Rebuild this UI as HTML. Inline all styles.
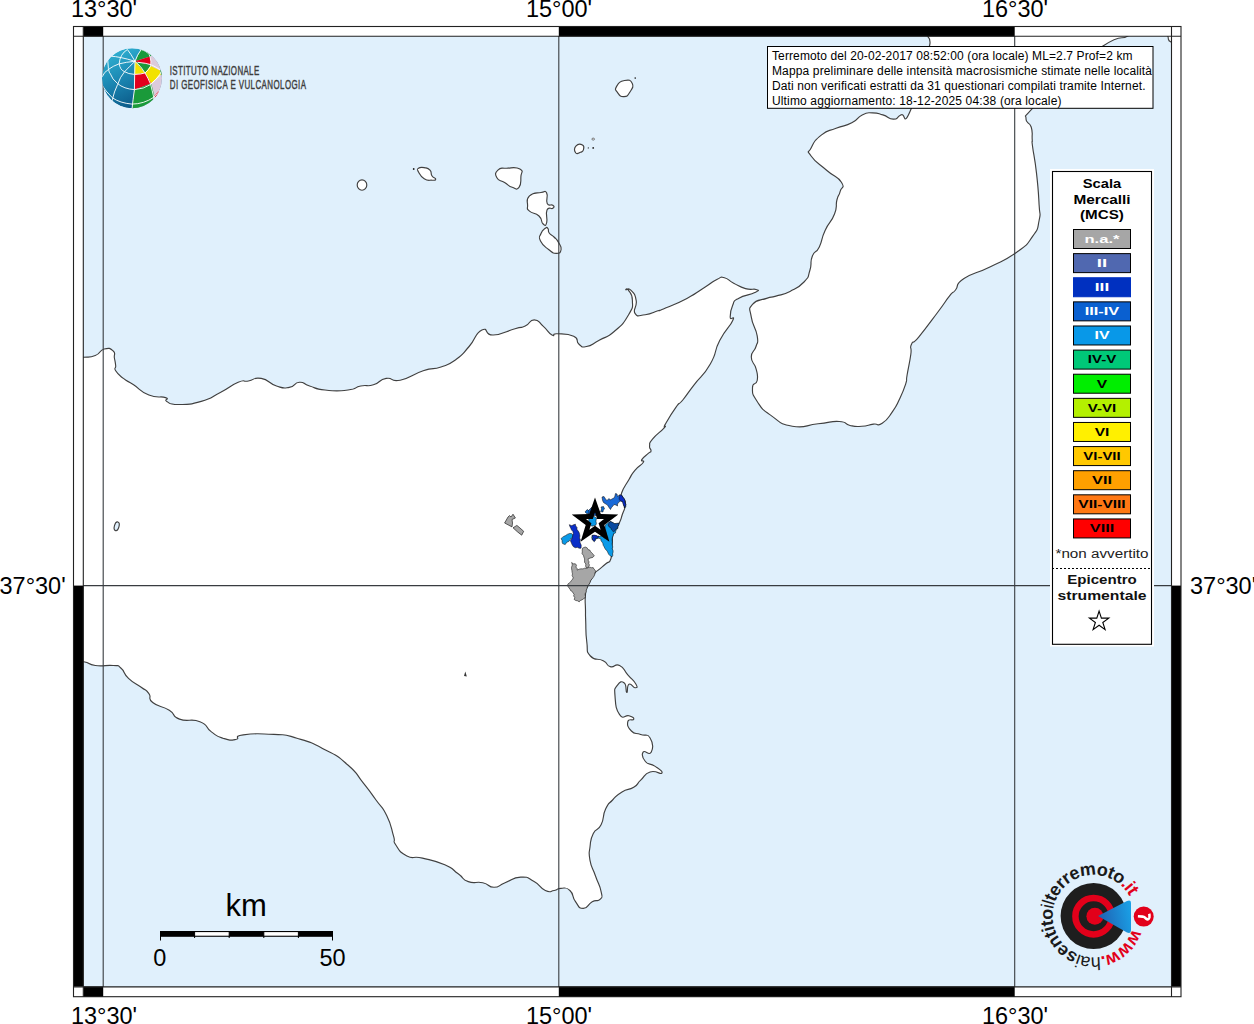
<!DOCTYPE html>
<html><head><meta charset="utf-8">
<style>
html,body{margin:0;padding:0;background:#fff;width:1254px;height:1024px;overflow:hidden;}
svg{display:block;font-family:"Liberation Sans",sans-serif;}
</style></head>
<body>
<svg width="1254" height="1024" viewBox="0 0 1254 1024">
<defs>
<clipPath id="mapclip"><rect x="83" y="36" width="1089" height="951"/></clipPath>
</defs>
<!-- sea -->
<rect x="83" y="36" width="1089" height="951" fill="#e0f0fc"/>
<g clip-path="url(#mapclip)" fill="#fff" stroke="#404040" stroke-width="1.15" stroke-linejoin="round">
<!-- SICILY -->
<path id="sicily" d="M70.0,357.3 C73.9,266.0 75.4,357.8 83.0,357.3 C90.6,356.8 88.9,358.0 95.3,355.5 C101.7,353.0 98.8,350.4 104.2,349.0 C109.6,347.6 110.1,348.3 113.2,351.0 C116.3,353.7 113.7,353.6 114.4,358.0 C115.2,362.4 115.3,361.9 115.7,365.7 C116.1,369.5 113.4,367.0 115.7,370.8 C118.0,374.6 118.0,374.2 123.4,378.4 C128.8,382.6 125.9,379.8 133.6,384.8 C141.2,389.8 139.3,391.2 148.9,395.0 C158.5,398.8 160.1,395.7 165.5,397.6 C170.9,399.5 163.0,399.3 166.8,401.4 C170.6,403.5 167.9,404.5 178.2,404.5 C188.5,404.5 188.6,405.0 201.2,401.4 C213.8,397.8 209.2,398.2 220.3,392.5 C231.4,386.8 229.8,385.8 238.2,382.3 C246.6,378.9 241.5,382.2 248.4,381.0 C255.3,379.8 252.8,376.9 261.2,378.4 C269.6,379.9 268.1,383.3 276.5,386.0 C284.9,388.7 282.3,388.5 289.2,387.4 C296.1,386.3 293.3,382.7 299.4,382.3 C305.5,381.9 301.9,383.7 309.6,386.0 C317.3,388.3 313.5,388.8 325.0,390.0 C336.5,391.2 337.3,391.2 348.0,390.0 C358.7,388.8 353.1,387.6 360.7,386.0 C368.3,384.4 365.8,387.1 373.4,384.8 C381.0,382.5 378.2,379.8 386.2,378.4 C394.2,377.0 389.1,382.5 400.2,380.2 C411.3,377.9 411.0,374.8 423.2,370.8 C435.4,366.8 431.1,370.4 441.0,367.0 C450.9,363.6 447.9,365.4 456.3,359.3 C464.7,353.2 461.4,355.3 469.1,346.5 C476.8,337.7 474.6,333.4 481.9,330.0 C489.2,326.6 483.4,335.4 493.3,335.0 C503.2,334.6 505.4,331.4 515.0,328.7 C524.6,326.0 519.4,328.8 525.2,326.1 C531.0,323.4 528.8,319.8 534.2,319.8 C539.6,319.8 537.8,321.5 543.1,326.1 C548.4,330.7 547.8,332.7 552.0,335.0 C556.2,337.3 550.6,333.4 557.1,333.8 C563.6,334.2 567.2,333.2 573.7,336.3 C580.2,339.4 575.0,340.9 578.8,344.0 C582.6,347.1 580.4,347.6 586.5,346.5 C592.6,345.4 590.8,344.8 599.2,340.2 C607.6,335.6 605.7,338.8 614.5,331.2 C623.3,323.6 623.2,323.9 628.6,314.7 C634.0,305.5 632.4,307.9 632.4,300.6 C632.4,293.3 630.5,293.6 628.6,290.4 C626.7,287.2 625.2,289.9 626.0,289.9 C626.8,289.9 628.0,287.2 631.1,290.4 C634.2,293.6 635.0,293.7 636.2,300.6 C637.4,307.5 632.3,309.2 635.0,313.4 C637.7,317.6 638.3,315.5 645.2,314.7 C652.1,313.9 652.4,312.5 657.9,310.8 C663.4,309.1 654.7,312.7 663.4,309.0 C672.1,305.3 674.2,305.1 686.9,298.4 C699.6,291.7 696.5,292.5 705.6,286.7 C714.7,280.9 711.7,281.9 717.3,279.2 C722.9,276.5 719.5,276.6 724.4,277.8 C729.3,279.0 727.4,280.0 733.7,283.2 C740.0,286.4 738.8,286.7 745.5,288.6 C752.2,290.5 753.2,288.3 756.0,289.5 C758.8,290.7 760.1,289.9 754.8,292.6 C749.5,295.3 745.1,294.5 738.4,298.4 C731.7,302.3 735.1,299.9 732.6,305.5 C730.1,311.1 730.2,312.6 730.2,317.2 C730.2,321.8 735.8,313.7 732.6,320.7 C729.5,327.7 726.4,327.6 719.7,340.6 C713.0,353.6 718.0,350.6 710.3,364.0 C702.6,377.4 702.1,374.3 693.9,385.1 C685.6,395.9 688.2,393.3 682.8,400.0 C677.4,406.7 681.2,400.0 675.9,407.3 C670.6,414.6 668.7,418.2 665.2,424.4 C661.7,430.5 668.0,423.4 664.2,427.8 C660.4,432.2 656.9,433.7 652.5,439.1 C648.1,444.5 650.1,442.4 649.6,445.9 C649.1,449.4 651.3,448.6 651.0,450.8 C650.7,453.0 651.4,450.6 648.6,453.2 C645.8,455.8 643.4,456.8 641.8,459.6 C640.2,462.4 645.3,459.3 643.2,462.5 C641.1,465.7 639.2,465.1 634.9,470.3 C630.5,475.6 632.7,473.3 628.7,480.0 C624.7,486.7 623.4,487.4 621.7,492.7 C620.0,498.0 621.9,494.4 623.0,497.8 C624.1,501.2 625.7,499.2 625.5,504.1 C625.3,509.1 624.3,508.6 622.4,514.3 C620.5,520.0 621.9,517.5 619.2,523.2 C616.5,528.9 615.6,526.8 613.5,533.3 C611.4,539.8 613.0,537.1 612.2,544.7 C611.4,552.3 612.8,553.0 610.9,558.7 C609.0,564.4 609.7,560.4 605.9,563.8 C602.1,567.2 601.7,567.1 598.2,570.1 C594.8,573.1 597.4,569.3 594.4,573.9 C591.4,578.5 590.8,579.3 588.1,585.4 C585.4,591.5 586.3,586.8 585.5,594.2 C584.7,601.6 585.4,602.0 585.5,610.0 C585.6,618.0 585.3,611.3 585.7,620.9 C586.1,630.5 585.4,631.5 586.8,642.0 C588.2,652.5 585.5,650.4 590.4,656.0 C595.3,661.6 597.2,657.5 603.2,660.7 C609.2,663.9 605.4,665.2 610.3,666.6 C615.2,668.0 614.4,662.9 619.6,665.4 C624.9,667.9 622.9,669.2 627.8,674.8 C632.7,680.4 633.9,680.3 636.0,684.2 C638.1,688.1 637.0,687.7 634.9,687.7 C632.8,687.7 631.5,682.8 629.0,684.2 C626.5,685.6 628.1,692.8 626.7,692.4 C625.3,692.0 627.1,685.1 624.3,683.0 C621.5,680.9 620.1,681.4 617.3,685.3 C614.5,689.2 614.3,687.1 615.0,695.9 C615.7,704.7 615.4,708.6 619.6,714.6 C623.8,720.6 624.8,714.4 629.0,715.8 C633.2,717.2 634.1,717.6 633.7,719.3 C633.3,721.0 628.5,718.1 627.8,721.6 C627.1,725.1 627.5,727.1 631.4,731.0 C635.3,734.9 635.1,732.4 640.7,734.5 C646.3,736.6 646.9,732.7 650.1,738.0 C653.3,743.3 653.4,747.9 651.3,752.1 C649.2,756.3 644.9,749.3 643.1,752.1 C641.3,754.9 641.9,757.3 645.4,761.5 C648.9,765.7 649.9,762.6 654.8,766.1 C659.7,769.6 663.2,771.4 661.8,773.2 C660.4,775.0 656.4,769.9 650.1,772.0 C643.8,774.1 645.6,775.6 640.7,780.2 C635.8,784.8 639.3,783.7 633.7,787.2 C628.1,790.7 628.3,788.1 622.0,791.9 C615.7,795.7 617.5,794.9 612.6,800.0 C607.7,805.1 609.1,801.6 605.6,809.0 C602.1,816.4 604.8,817.3 601.1,824.7 C597.4,832.1 596.6,826.9 593.3,833.6 C590.0,840.3 591.0,839.0 590.0,847.0 C589.0,855.0 588.4,851.7 590.0,860.4 C591.6,869.1 592.2,866.6 595.5,876.0 C598.8,885.4 599.8,884.6 601.1,891.6 C602.5,898.6 602.7,896.4 600.0,899.4 C597.3,902.4 597.2,899.0 592.2,901.7 C587.2,904.4 588.3,908.4 583.3,908.4 C578.3,908.4 579.5,907.1 575.5,901.7 C571.5,896.3 574.3,894.5 569.9,890.5 C565.5,886.5 565.6,888.3 560.9,888.3 C556.2,888.3 558.9,889.8 554.2,890.5 C549.5,891.2 551.3,893.2 545.3,890.5 C539.3,887.8 541.5,885.6 534.1,881.6 C526.7,877.6 529.4,876.8 520.7,877.1 C512.0,877.4 513.1,879.7 505.1,882.7 C497.1,885.7 500.7,887.2 494.0,887.2 C487.3,887.2 490.5,884.4 482.8,882.7 C475.1,881.0 475.7,884.3 468.3,881.6 C460.9,878.9 465.2,878.8 458.2,873.8 C451.1,868.8 455.5,869.5 444.8,864.8 C434.1,860.1 433.9,860.8 422.5,858.1 C411.1,855.4 414.9,859.9 406.9,855.9 C398.9,851.9 399.7,850.7 395.7,844.7 C391.7,838.7 396.2,844.5 393.5,835.8 C390.8,827.1 392.1,826.4 386.8,815.7 C381.6,805.0 383.1,809.8 376.0,800.0 C368.9,790.2 371.6,793.4 363.2,782.9 C354.8,772.4 359.4,775.0 347.9,765.0 C336.4,755.0 340.3,757.7 325.0,749.7 C309.7,741.7 312.2,742.8 296.9,738.2 C281.6,733.6 290.0,735.4 273.9,734.4 C257.8,733.4 254.8,733.4 243.3,734.9 C231.8,736.4 241.7,738.5 235.6,739.5 C229.5,740.5 230.2,740.5 222.9,738.2 C215.6,735.9 218.3,736.9 211.4,731.9 C204.5,726.9 209.5,725.5 199.9,721.7 C190.3,717.9 188.7,722.6 179.5,719.1 C170.3,715.6 177.3,715.2 169.3,710.2 C161.3,705.2 158.8,707.5 152.7,702.5 C146.6,697.5 152.3,698.2 148.9,693.6 C145.5,689.0 147.3,691.8 141.2,687.2 C135.1,682.6 134.6,684.1 128.5,678.3 C122.4,672.5 125.4,671.8 120.8,668.0 C116.2,664.2 120.9,666.2 113.2,665.5 C105.5,664.8 104.1,666.6 95.3,665.5 C86.5,664.4 91.4,662.8 83.8,661.7 C76.2,660.6 74.1,753.0 70.0,661.7 C65.9,570.4 66.1,448.6 70.0,357.3 Z"/>
<!-- CALABRIA -->
<path id="calabria" d="M929.7,30.0 C870.2,34.5 935.2,21.4 929.7,45.0 C924.2,68.5 920.0,87.5 911.3,108.5 C902.6,129.5 906.1,111.9 900.7,115.1 C895.3,118.3 898.6,119.2 893.3,119.1 C888.0,119.0 889.1,116.8 882.9,114.9 C876.7,113.0 878.8,112.9 872.6,112.9 C866.4,112.9 868.4,111.9 862.2,114.9 C856.0,117.9 859.6,118.8 851.8,122.8 C844.0,126.8 845.2,124.7 836.1,128.3 C827.0,131.9 829.1,129.0 821.6,134.9 C814.1,140.8 814.2,141.7 811.1,148.0 C808.0,154.3 806.4,149.2 811.1,156.0 C815.8,162.8 817.8,162.6 826.9,170.5 C836.0,178.4 837.4,176.0 841.4,182.3 C845.4,188.6 841.5,186.3 840.1,191.6 C838.8,196.9 838.6,193.3 836.9,200.0 C835.2,206.7 838.0,204.8 834.5,214.0 C831.0,223.2 829.7,220.6 825.1,230.5 C820.5,240.4 823.1,239.2 819.3,246.9 C815.5,254.6 815.1,249.2 812.3,256.2 C809.5,263.2 812.4,262.6 809.9,270.3 C807.4,278.0 810.0,275.7 804.0,282.0 C798.0,288.3 798.4,287.2 790.0,291.4 C781.6,295.6 782.9,294.0 775.9,296.1 C768.9,298.2 773.6,295.9 766.6,298.4 C759.6,300.9 757.1,298.7 752.5,304.3 C747.9,309.9 749.9,307.7 751.3,317.2 C752.7,326.7 755.8,327.1 757.2,335.9 C758.6,344.7 757.8,340.2 756.0,346.5 C754.2,352.8 751.3,350.3 751.3,357.0 C751.3,363.7 754.2,361.6 756.0,368.7 C757.8,375.8 758.2,374.9 757.2,380.5 C756.2,386.1 752.5,381.2 752.5,387.5 C752.5,393.8 751.6,393.1 757.2,401.5 C762.8,409.9 760.7,408.2 771.2,415.6 C781.7,423.0 778.2,423.7 792.3,426.2 C806.4,428.7 804.0,425.2 818.1,423.8 C832.2,422.4 829.6,421.0 839.2,421.5 C848.8,422.0 843.2,424.1 850.0,425.5 C856.8,426.9 854.7,426.7 861.7,426.3 C868.7,425.9 867.2,425.0 873.4,424.1 C879.5,423.2 876.5,427.1 882.2,423.3 C887.9,419.6 887.2,419.1 892.5,411.6 C897.8,404.1 895.8,406.7 899.8,398.4 C903.8,390.1 903.5,390.8 905.7,383.8 C907.9,376.8 905.6,383.8 907.1,375.0 C908.6,366.2 909.5,363.7 910.8,354.5 C912.1,345.3 909.1,349.5 911.5,344.2 C913.9,338.9 911.0,346.6 918.9,336.9 C926.8,327.2 928.7,324.3 937.9,312.0 C947.1,299.7 944.3,302.5 949.6,295.9 C954.9,289.3 951.2,295.2 955.5,290.0 C959.8,284.8 953.5,285.6 964.0,278.6 C974.5,271.6 974.6,274.6 990.4,266.7 C1006.2,258.8 1004.0,261.3 1016.7,252.2 C1029.4,243.1 1025.9,245.9 1032.6,236.4 C1039.3,226.9 1037.1,230.0 1039.1,220.5 C1041.0,211.0 1039.9,218.9 1039.1,204.7 C1038.3,190.5 1038.5,190.5 1036.5,173.1 C1034.5,155.7 1033.9,156.8 1032.6,146.7 C1031.3,136.6 1032.6,145.3 1032.2,139.4 C1031.8,133.5 1033.1,133.2 1031.2,127.0 C1029.3,120.8 1025.7,124.2 1026.0,118.7 C1026.3,113.2 1022.0,120.3 1032.2,108.7 C1042.4,97.1 1038.8,98.8 1060.0,80.0 C1081.2,61.2 1082.7,59.2 1103.0,46.0 C1123.3,32.8 1120.2,40.8 1127.7,36.0 C1135.2,31.2 1187.4,31.8 1128.0,30.0 C1068.6,28.2 989.2,25.5 929.7,30.0 Z"/>
<path d="M1168.0,30.0 C1164.4,32.0 1167.1,33.1 1168.0,36.7 C1168.9,40.3 1167.4,40.4 1171.0,42.0 C1174.6,43.6 1177.3,45.6 1180.0,42.0 C1182.7,38.4 1183.6,33.6 1180.0,30.0 C1176.4,26.4 1171.6,28.0 1168.0,30.0 Z"/>
<!-- Aeolian islands -->
<ellipse cx="362" cy="185" rx="4.8" ry="5.2"/>
<path d="M418.5,168.2 C420.2,166.9 420.8,167.0 424.2,167.6 C427.6,168.2 427.7,167.6 430.0,170.1 C432.3,172.6 430.2,173.1 431.9,175.8 C433.6,178.5 435.7,177.8 435.7,179.1 C435.7,180.4 435.3,180.3 431.9,180.2 C428.4,180.1 428.2,181.2 424.2,178.7 C420.2,176.2 420.2,175.2 418.5,172.0 C416.8,168.8 416.8,169.5 418.5,168.2 Z"/>
<path d="M497.9,170.1 C500.8,167.2 499.9,168.5 506.5,168.2 C513.1,167.9 515.6,166.5 519.9,169.1 C524.2,171.7 521.2,171.3 520.9,176.8 C520.6,182.3 521.6,184.2 519.0,187.3 C516.4,190.5 516.5,188.7 512.2,187.3 C507.9,185.9 509.2,185.3 504.6,182.5 C500.0,179.7 498.9,181.5 496.9,177.8 C494.9,174.1 495.0,173.0 497.9,170.1 Z"/>
<path d="M616.6,86.4 C618.7,82.7 619.8,81.4 624.5,80.5 C629.2,79.6 630.7,79.9 632.3,83.4 C633.9,86.9 632.3,88.2 629.8,92.2 C627.3,96.2 627.7,96.4 624.0,96.6 C620.3,96.8 619.8,95.8 617.6,92.7 C615.4,89.6 614.5,90.1 616.6,86.4 Z"/>
<path d="M529.5,195.9 C533.5,192.0 535.8,193.3 541.0,192.5 C546.2,191.7 544.8,189.8 546.7,193.1 C548.6,196.4 545.4,199.9 547.2,203.5 C549.0,207.1 551.1,203.8 552.8,205.2 C554.5,206.6 554.5,206.9 552.8,208.3 C551.1,209.7 548.8,205.7 547.0,210.0 C545.2,214.3 547.9,218.6 546.7,222.7 C545.5,226.8 545.2,225.7 542.9,223.7 C540.6,221.7 543.0,219.8 539.0,216.0 C535.0,212.2 532.9,214.3 529.5,211.2 C526.1,208.0 527.6,210.1 527.6,205.5 C527.6,200.9 525.5,199.8 529.5,195.9 Z"/>
<path d="M545.3,228.3 C547.4,226.8 546.8,227.2 548.0,228.6 C549.2,230.0 547.4,230.5 549.2,233.0 C551.0,235.5 551.3,234.3 554.0,237.0 C556.7,239.7 556.1,238.2 558.2,241.9 C560.3,245.7 561.7,246.1 561.1,249.5 C560.5,252.9 560.0,253.3 556.3,253.3 C552.5,253.3 553.3,253.2 548.6,249.5 C543.9,245.8 542.8,245.8 540.5,241.0 C538.2,236.2 539.6,237.3 541.0,233.5 C542.4,229.7 543.2,229.8 545.3,228.3 Z"/>
<path d="M576.1,145.9 C578.2,143.6 580.3,143.8 582.5,145.0 C584.7,146.2 584.0,147.6 583.4,149.8 C582.8,152.0 582.8,151.4 580.5,152.3 C578.2,153.2 576.9,154.7 575.6,152.8 C574.3,150.9 574.0,148.2 576.1,145.9 Z"/>
<circle cx="413.7" cy="169" r="0.9" fill="#222" stroke="none"/>
<circle cx="635.2" cy="78.1" r="0.8" fill="#222" stroke="none"/>
<ellipse cx="593.2" cy="139.1" rx="1.3" ry="1" stroke-width="0.7"/>
<circle cx="593.2" cy="147.9" r="0.9" fill="#222" stroke="none"/>
<circle cx="588.3" cy="147.9" r="0.6" fill="#222" stroke="none"/>
<ellipse cx="116.7" cy="526.3" rx="2.3" ry="4.5" fill="#e0f0fc" transform="rotate(15 116.7 526.3)"/>
</g>
<path fill="#a6a6a6" stroke="#222" stroke-width="0.7" d="M504.6,523 L508,517 L509.5,515.6 L511,517 L513,514.2 L515.4,518 L512,519.5 L512.5,523 L512,526.9 Z M513,527.8 L516.9,525.4 L520,528 L523.7,531.3 L521.7,535.2 L517.3,531.7 Z"/>
<path fill="#333" stroke="none" d="M464,676 L465.3,671.5 L466.8,676.5 Z"/>
<!-- intensity patches -->
<g stroke="#111" stroke-width="0.55" stroke-linejoin="round">
<path fill="#a6a6a6" d="M582.5,548.2 L584.0,547.4 L585.6,547.1 L587.2,547.9 L588.0,549.6 L589.8,550.1 L590.7,551.7 L591.9,553.1 L593.2,554.3 L594.3,555.8 L592.8,557.4 L590.7,557.9 L588.1,558.9 L588.3,560.4 L589.1,561.9 L588.7,563.4 L589.4,564.9 L589.0,566.5 L587.7,567.5 L586.0,567.5 L585.6,565.8 L585.9,564.0 L584.6,562.4 L584.5,560.7 L584.6,558.9 L583.9,557.1 L583.4,555.2 L582.0,553.8 L582.3,551.9 L582.2,550.1 Z"/>
<path fill="#a6a6a6" d="M571.6,562.5 L573.3,563.8 L575.4,563.8 L576.5,565.2 L575.9,567.1 L577.1,568.4 L577.3,570.1 L579.1,569.2 L581.0,568.8 L583.0,568.9 L584.6,568.2 L586.5,568.5 L588.1,567.6 L589.8,567.2 L591.5,567.7 L593.2,567.6 L593.9,569.0 L595.0,570.0 L595.7,571.4 L594.9,572.9 L594.7,574.7 L594.0,576.2 L593.0,577.7 L591.9,579.0 L590.7,580.5 L590.1,582.3 L589.3,583.9 L588.1,585.4 L587.4,587.0 L586.9,588.8 L586.2,590.4 L586.2,592.0 L585.3,593.4 L585.1,594.9 L585.5,596.5 L584.9,598.0 L583.4,598.9 L582.0,599.9 L580.3,600.5 L579.2,601.9 L577.6,600.8 L575.7,600.5 L574.1,599.4 L574.8,597.7 L573.6,595.9 L574.1,594.2 L573.0,593.0 L572.3,591.5 L570.7,590.7 L570.0,589.2 L569.0,587.9 L567.8,586.2 L567.8,584.1 L569.2,583.0 L570.6,581.8 L571.6,580.3 L572.8,579.0 L573.1,577.3 L572.1,575.7 L572.5,573.9 L572.1,572.3 L571.9,570.6 L571.6,568.9 L571.5,567.3 L572.1,565.7 L572.2,564.1 Z"/>
<path fill="#0a9ae8" d="M561.1,538.5 L562.4,537.4 L563.7,536.4 L565.6,535.6 L567.2,534.4 L569.8,533.4 L571.6,533.6 L572.8,534.9 L573.3,536.9 L571.9,537.7 L570.8,539.0 L569.6,540.1 L568.8,541.5 L567.1,542.0 L566.1,543.2 L565.2,544.6 L562.6,543.6 L562.1,542.1 L562.1,540.5 Z"/>
<path fill="#0a2ec8" d="M569.3,524.7 L571.8,525.7 L573.5,524.8 L575.4,524.2 L575.7,526.0 L577.0,527.4 L576.9,529.3 L578.0,530.8 L579.0,532.3 L579.6,534.2 L579.9,536.1 L579.5,538.0 L580.4,539.8 L579.8,541.8 L580.5,543.6 L581.2,545.1 L581.2,546.6 L581.0,548.2 L579.1,548.2 L577.3,547.3 L575.4,547.7 L573.5,546.8 L572.3,545.1 L571.6,543.6 L571.0,542.0 L570.3,540.5 L571.6,539.0 L572.4,537.3 L572.8,535.4 L573.3,533.3 L572.8,531.3 L571.5,530.0 L570.8,528.3 L569.9,526.5 Z"/>
<path fill="#0a9ae8" d="M592.2,535.4 L594.8,535.9 L596.3,535.7 L597.8,536.4 L599.4,536.5 L600.9,535.9 L602.7,536.5 L604.0,538.0 L606.0,537.5 L608.0,538.0 L607.0,536.5 L606.3,534.8 L606.0,533.0 L605.7,531.4 L605.6,529.8 L604.9,528.3 L605.0,526.7 L605.7,524.5 L607.5,523.2 L608.7,522.3 L610.1,521.6 L611.7,522.1 L613.1,523.1 L614.7,523.7 L616.8,524.1 L618.8,523.2 L618.2,524.8 L618.0,526.6 L617.7,528.3 L616.6,529.6 L615.7,531.0 L615.5,532.9 L613.6,533.7 L613.1,535.4 L612.5,537.0 L612.2,538.6 L612.1,540.3 L612.4,542.0 L612.1,543.6 L612.3,545.3 L612.8,547.0 L612.2,548.7 L613.0,550.4 L613.1,552.1 L612.6,553.8 L612.8,555.4 L612.1,556.8 L610.1,555.8 L608.7,554.3 L607.8,552.5 L607.0,550.7 L605.6,549.6 L604.8,548.2 L604.1,546.7 L603.2,545.3 L602.9,543.6 L602.1,542.1 L601.0,540.8 L600.9,539.0 L598.9,538.2 L596.8,538.5 L595.4,539.9 L594.3,541.5 L592.2,539.5 L591.7,537.5 Z"/>
<path fill="#0a4aa0" d="M610.1,521.6 L611.8,522.0 L613.3,522.8 L614.7,523.7 L616.7,523.3 L618.8,523.2 L618.9,525.0 L617.6,526.5 L617.7,528.3 L615.8,529.0 L614.9,530.8 L613.5,532.0 L612.6,530.7 L611.3,529.6 L611.0,528.0 L609.1,526.9 L608.0,525.0 L608.9,523.2 Z"/>
<path fill="#0a2ec8" d="M592.2,535.4 L594.1,535.1 L596.0,535.5 L597.4,536.3 L599.0,536.2 L598.0,537.8 L596.6,538.5 L595.0,538.2 L595.3,540.0 L594.3,541.5 L592.2,539.5 L592.8,537.5 Z"/>
<path fill="#1a6ad8" d="M602.0,497.0 L604.0,496.5 L605.5,499.0 L607.0,500.5 L609.0,498.5 L610.0,500.0 L612.0,499.0 L614.5,497.5 L615.0,495.5 L615.5,493.5 L617.0,494.0 L617.5,496.5 L619.5,495.0 L621.5,495.0 L623.0,497.5 L624.4,499.0 L625.0,501.0 L625.3,502.8 L625.8,504.5 L625.8,506.5 L624.5,508.0 L624.0,506.5 L623.5,505.0 L623.6,503.1 L622.5,501.5 L620.5,501.0 L618.5,502.5 L617.5,504.1 L617.5,506.0 L616.0,505.0 L614.0,504.5 L612.5,506.5 L611.3,507.8 L610.5,509.5 L609.0,507.5 L607.5,505.0 L605.0,503.5 L603.5,502.5 L602.7,500.8 L602.3,498.9 Z"/>
<path fill="#0a2ec8" d="M619.5,495.0 L621.5,495.0 L623.0,497.5 L624.4,499.0 L625.0,501.0 L625.0,502.8 L625.8,504.5 L625.1,506.2 L624.5,508.0 L624.4,506.4 L623.5,505.0 L622.8,503.3 L622.5,501.5 L620.5,501.0 L619.4,499.7 L619.0,498.0 L619.7,496.6 Z"/>
<path fill="#0a9ae8" d="M589.2,518.1 L591.0,518.0 L592.5,517.1 L593.8,516.0 L595.1,517.4 L596.8,518.1 L596.1,519.8 L596.0,521.6 L596.4,523.5 L595.8,525.2 L593.7,525.7 L591.7,526.2 L590.5,524.8 L589.7,523.2 L588.9,521.6 L588.7,519.9 Z"/>
<path fill="#1a6ad8" d="M588.0,512.0 L588.7,510.3 L590.0,509.0 L592.0,507.0 L594.0,508.0 L596.0,509.5 L596.8,511.2 L597.0,513.0 L596.0,514.4 L595.5,516.0 L593.8,515.1 L592.0,515.5 L589.5,516.0 L588.7,514.0 Z"/>
<path fill="#0a6ad0" d="M601.0,507.0 L603.5,506.5 L604.5,509.0 L603.2,510.2 L603.0,512.0 L600.5,511.5 L601.3,510.1 L601.5,508.6 Z"/>
<path fill="#0a6ad0" d="M585.0,512.0 L586.1,510.6 L587.5,509.5 L589.0,511.0 L588.9,512.6 L588.0,514.0 L586.3,513.3 Z"/>
</g>
<!-- epicentre star -->
<path fill="#000" fill-rule="evenodd" d="M595,497.5 L600.8,514.1 L618.3,514.4 L604.3,525.1 L609.4,541.8 L595,531.7 L580.6,541.8 L585.7,525.1 L571.7,514.4 L589.2,514.1 Z M595,512.5 L597.2,518.9 L604,519.1 L598.6,523.2 L600.6,529.7 L595,525.8 L589.4,529.7 L591.4,523.2 L586,519.1 L592.8,518.9 Z"/>
<!-- grid lines -->
<g stroke="#383c40" stroke-width="1.1" fill="none">
<line x1="103.2" y1="36" x2="103.2" y2="987"/>
<line x1="558.8" y1="36" x2="558.8" y2="987"/>
<line x1="1014.7" y1="36" x2="1014.7" y2="987"/>
<line x1="83" y1="585.6" x2="1171.5" y2="585.6"/>
</g>
<!-- frame -->
<g>
<rect x="83.5" y="26" width="19.7" height="10.5" fill="#000"/>
<rect x="558.8" y="26" width="455.9" height="10.5" fill="#000"/>
<rect x="83.5" y="986.5" width="19.7" height="10.5" fill="#000"/>
<rect x="558.8" y="986.5" width="455.9" height="10.5" fill="#000"/>
<rect x="73.5" y="585.6" width="10" height="401" fill="#000"/>
<rect x="1171.5" y="585.6" width="9.5" height="401" fill="#000"/>
<rect x="73.5" y="26.5" width="1107.5" height="970.2" fill="none" stroke="#222" stroke-width="1.1"/>
<g stroke="#222" stroke-width="1.1">
<line x1="83.3" y1="26" x2="83.3" y2="997"/>
<line x1="1171.5" y1="26" x2="1171.5" y2="997"/>
<line x1="73" y1="36.2" x2="1181" y2="36.2"/>
<line x1="73" y1="986.9" x2="1181" y2="986.9"/>
</g>
</g>
<!-- axis labels -->
<g font-size="23.5" fill="#000" text-anchor="middle">
<text x="104" y="17">13°30'</text>
<text x="559" y="17">15°00'</text>
<text x="1015" y="17">16°30'</text>
<text x="104" y="1023.8">13°30'</text>
<text x="559" y="1023.8">15°00'</text>
<text x="1015" y="1023.8">16°30'</text>
<text x="-0.5" y="594" text-anchor="start">37°30'</text>
<text x="1190" y="594" text-anchor="start">37°30'</text>
</g>
<!-- INGV logo -->
<defs>
<linearGradient id="gblue" x1="0.15" y1="0.1" x2="0.55" y2="0.95">
<stop offset="0" stop-color="#2eaed0"/><stop offset="0.5" stop-color="#1a84b0"/><stop offset="1" stop-color="#0b5a88"/>
</linearGradient>
<clipPath id="globeclip"><circle cx="32" cy="32.2" r="30"/></clipPath>
<linearGradient id="tri" x1="0" y1="0.5" x2="1" y2="0.3">
<stop offset="0" stop-color="#1f5fb0"/><stop offset="1" stop-color="#1aa0e6"/>
</linearGradient>
</defs>
<g transform="translate(100,46)">
<g clip-path="url(#globeclip)">
<circle cx="32" cy="32.2" r="30" fill="url(#gblue)"/>
<path fill="#dccbdc" d="M35,15.3 L41.25,3 L64,0 L64,64 L32,64 L34.4,43.75 Z"/>
<path fill="#1a9a3a" d="M35,15.3 L41.25,3 L47,2 L53,8 L50,10.6 Z"/>
<path fill="#e2001c" d="M35,15.3 L50,10.6 L51.25,18.75 L37.5,16.25 Z"/>
<path fill="#1a9a3a" d="M35,15.3 L37.5,16.25 L51.25,18.75 L50.6,20 L45,26.9 Z"/>
<path fill="#f2e200" d="M35,15.3 L45,26.9 L34.6,28.4 Z"/>
<path fill="#f2e200" d="M45,26.9 L50.6,20 L60,24.5 L61,28.5 L51.25,37.5 Z"/>
<path fill="#1a9a3a" d="M60,24.5 L64,24 L64,31 L61,28.5 Z"/>
<path fill="#e2001c" d="M34.6,28.4 L45,26.9 L51.25,37.5 L34.4,43.75 Z"/>
<path fill="#1a9a3a" d="M34.4,43.75 L51.25,37.5 L54.4,50 L50,64 L32,64 Z"/>
<path fill="#e2001c" d="M54.4,50 L58.5,45 L62,47 L56,54 Z"/>
</g>
<g fill="none" stroke="#fff" stroke-width="0.9" clip-path="url(#globeclip)">
<path d="M27.4,3.5 Q31,8 35,15.3"/>
<path d="M41.25,3.5 Q37,9 35,15.3"/>
<path d="M27.4,3.5 Q20,8 19.2,17.6 Q20,24 24.6,25.7 Q28,28 34.6,28.4 Q41,28.4 45,26.9 Q49,24 50.6,20 Q51.5,15 50,10.6 Q49,6 41.25,3.5"/>
<path d="M10.5,10.2 Q19.7,10.5 35,15.3"/>
<path d="M2.1,30.9 Q4,26 8.8,23.2 Q13,20 19,17.9 Q26,16 35,15.3"/>
<path d="M8.4,4 Q7,14 8.4,22.5 Q9,27 10.5,28.1 Q12,33 17.5,37.5 Q24,43 34.4,43.6 Q44,43 50.6,38.5 Q56,34 60,28.1 Q62,24 63,22"/>
<path d="M35,15.3 Q30,20 24.6,25.7 Q20,31 17.5,38.75 Q14,46 12.5,53.1 Q11,58 10,64"/>
<path d="M35,15.3 Q34.6,28 34.4,43.75 Q33,53 31.9,64"/>
<path d="M35,15.3 Q41,20 45,26.9 Q48,32 50.6,38.1 Q52,44 53.75,51.25 Q54,54 55,58"/>
<path d="M37.5,16.25 Q46,17 51.25,18.75 Q58,22 60,23.75"/>
<path d="M0,36.25 Q6,46 12.5,51.9 Q20,57 31.9,58.1 Q44,58 53.75,51.25 Q58,47 60,44"/>
<path d="M51.25,37.5 Q56,33 60,29.4"/>
</g>
</g>
<g fill="#3d3d3d" stroke="#3d3d3d" stroke-width="0.45" transform="translate(169.8,0) scale(0.6,1)">
<text x="0" y="75.2" font-size="13.2" textLength="149" lengthAdjust="spacing">ISTITUTO NAZIONALE</text>
<text x="0" y="89.4" font-size="13.2" textLength="227" lengthAdjust="spacing">DI GEOFISICA E VULCANOLOGIA</text>
</g>
<!-- hsit logo -->
<g>
<circle cx="1093.6" cy="916.1" r="33" fill="#1e1e1e"/>
<circle cx="1093.6" cy="916.2" r="18.2" fill="none" stroke="#e2001a" stroke-width="6.5"/>
<circle cx="1094.9" cy="916.3" r="8.5" fill="#e2001a"/>
<path d="M1098,916 L1127,901 Q1131,899.5 1131,903 L1131,930 Q1131,934 1127,932.5 Z" fill="url(#tri)"/>
<circle cx="1143.7" cy="916.6" r="10" fill="#e2001a"/>
<path d="M1137.9,916.3 L1142.5,916.6 Q1144.5,917 1146,918.6 Q1148.5,920.5 1149.4,917.5 Q1149.8,915.5 1149.2,913.8" fill="none" stroke="#fff" stroke-width="2.6"/>
<path id="hsitcirc" d="M1134.6,916.1 A41,41 0 1,1 1052.6,916.1 A41,41 0 1,1 1134.6,916.1" fill="none"/>
<text font-size="18" fill="#1a1a1a"><textPath href="#hsitcirc" startOffset="13" textLength="224" lengthAdjust="spacing"><tspan fill="#e2001a" font-weight="bold">www.</tspan><tspan>hai</tspan><tspan font-weight="bold">sentito</tspan><tspan>il</tspan><tspan font-weight="bold">terremoto</tspan><tspan fill="#e2001a" font-weight="bold">.it</tspan></textPath></text>
</g>
<!-- info box -->
<rect x="767.5" y="46.5" width="385.5" height="61.8" fill="#fff" stroke="#000" stroke-width="1"/>
<g font-size="12" fill="#000">
<text x="772" y="59.6" textLength="360.5">Terremoto del 20-02-2017 08:52:00 (ora locale) ML=2.7 Prof=2 km</text>
<text x="772" y="74.6" textLength="380">Mappa preliminare delle intensità macrosismiche stimate nelle località</text>
<text x="772" y="89.6" textLength="373.5">Dati non verificati estratti da 31 questionari compilati tramite Internet.</text>
<text x="772" y="104.6" textLength="289.5">Ultimo aggiornamento: 18-12-2025 04:38 (ora locale)</text>
</g>
<!-- legend -->
<rect x="1050" y="169" width="104" height="477.5" fill="#fff"/>
<rect x="1052.5" y="171.5" width="99" height="472.8" fill="#fff" stroke="#000" stroke-width="1.1"/>
<g font-size="12" font-weight="bold" fill="#000" text-anchor="middle">
<text x="1102" y="188" textLength="38.5" lengthAdjust="spacingAndGlyphs">Scala</text>
<text x="1102" y="203.7" textLength="57.2" lengthAdjust="spacingAndGlyphs">Mercalli</text>
<text x="1102" y="219.4" textLength="43.9" lengthAdjust="spacingAndGlyphs">(MCS)</text>
</g>
<g stroke="#000" stroke-width="1">
<rect x="1073.5" y="229.50" width="57" height="19" fill="#a6a6a6"/>
<rect x="1073.5" y="253.62" width="57" height="19" fill="#5068b0"/>
<rect x="1073.5" y="277.74" width="57" height="19" fill="#0030c0" stroke="#0030c0"/>
<rect x="1073.5" y="301.86" width="57" height="19" fill="#0a60d0"/>
<rect x="1073.5" y="325.98" width="57" height="19" fill="#0898e8"/>
<rect x="1073.5" y="350.10" width="57" height="19" fill="#00c878"/>
<rect x="1073.5" y="374.22" width="57" height="19" fill="#00ee00"/>
<rect x="1073.5" y="398.34" width="57" height="19" fill="#b4f000"/>
<rect x="1073.5" y="422.46" width="57" height="19" fill="#fff000"/>
<rect x="1073.5" y="446.58" width="57" height="19" fill="#ffc800"/>
<rect x="1073.5" y="470.70" width="57" height="19" fill="#ffa000"/>
<rect x="1073.5" y="494.82" width="57" height="19" fill="#ff7814"/>
<rect x="1073.5" y="518.94" width="57" height="19" fill="#ff0000"/>
</g>
<g font-size="11.5" font-weight="bold" text-anchor="middle">
<text x="1102" y="242.80" fill="#fff" textLength="35" lengthAdjust="spacingAndGlyphs">n.a.*</text>
<text x="1102" y="266.92" fill="#fff" textLength="10.4" lengthAdjust="spacingAndGlyphs">II</text>
<text x="1102" y="291.04" fill="#fff" textLength="14.4" lengthAdjust="spacingAndGlyphs">III</text>
<text x="1102" y="315.16" fill="#fff" textLength="34.5" lengthAdjust="spacingAndGlyphs">III-IV</text>
<text x="1102" y="339.28" fill="#fff" textLength="15" lengthAdjust="spacingAndGlyphs">IV</text>
<text x="1102" y="363.40" fill="#000" textLength="28.5" lengthAdjust="spacingAndGlyphs">IV-V</text>
<text x="1102" y="387.52" fill="#000" textLength="10.4" lengthAdjust="spacingAndGlyphs">V</text>
<text x="1102" y="411.64" fill="#000" textLength="28.4" lengthAdjust="spacingAndGlyphs">V-VI</text>
<text x="1102" y="435.76" fill="#000" textLength="14.7" lengthAdjust="spacingAndGlyphs">VI</text>
<text x="1102" y="459.88" fill="#000" textLength="37.3" lengthAdjust="spacingAndGlyphs">VI-VII</text>
<text x="1102" y="484.00" fill="#000" textLength="20" lengthAdjust="spacingAndGlyphs">VII</text>
<text x="1102" y="508.12" fill="#000" textLength="47.4" lengthAdjust="spacingAndGlyphs">VII-VIII</text>
<text x="1102" y="532.24" fill="#000" textLength="24.4" lengthAdjust="spacingAndGlyphs">VIII</text>
</g>
<text x="1102" y="558" font-size="12" text-anchor="middle" fill="#222" textLength="93" lengthAdjust="spacingAndGlyphs">*non avvertito</text>
<line x1="1052" y1="568.5" x2="1151" y2="568.5" stroke="#000" stroke-width="1" stroke-dasharray="2,2"/>
<g font-size="12" font-weight="bold" text-anchor="middle" fill="#111">
<text x="1102" y="584" textLength="69.5" lengthAdjust="spacingAndGlyphs">Epicentro</text>
<text x="1102" y="600" textLength="89" lengthAdjust="spacingAndGlyphs">strumentale</text>
</g>
<path d="M1099.1,611.1 L1101.4,618.1 L1108.8,618.1 L1102.8,622.5 L1105.1,629.6 L1099.1,625.2 L1093.1,629.6 L1095.4,622.5 L1089.4,618.1 L1096.8,618.1 Z" fill="none" stroke="#000" stroke-width="1.1" stroke-linejoin="miter"/>
<!-- scale bar -->
<g>
<rect x="160" y="931" width="173" height="5.8" fill="#000"/>
<rect x="194.6" y="932.1" width="34.6" height="3.6" fill="#fff"/>
<rect x="263.8" y="932.1" width="34.6" height="3.6" fill="#fff"/>
<g stroke="#000" stroke-width="1">
<line x1="160.5" y1="931" x2="160.5" y2="940.5"/>
<line x1="194.6" y1="931" x2="194.6" y2="938"/>
<line x1="229.2" y1="931" x2="229.2" y2="938"/>
<line x1="263.8" y1="931" x2="263.8" y2="938"/>
<line x1="298.4" y1="931" x2="298.4" y2="938"/>
<line x1="332.5" y1="931" x2="332.5" y2="940.5"/>
</g>
<text x="246.1" y="915.7" font-size="31" text-anchor="middle">km</text>
<text x="159.7" y="965.5" font-size="23.5" text-anchor="middle">0</text>
<text x="332.6" y="965.5" font-size="23.5" text-anchor="middle">50</text>
</g>
</svg>
</body></html>
